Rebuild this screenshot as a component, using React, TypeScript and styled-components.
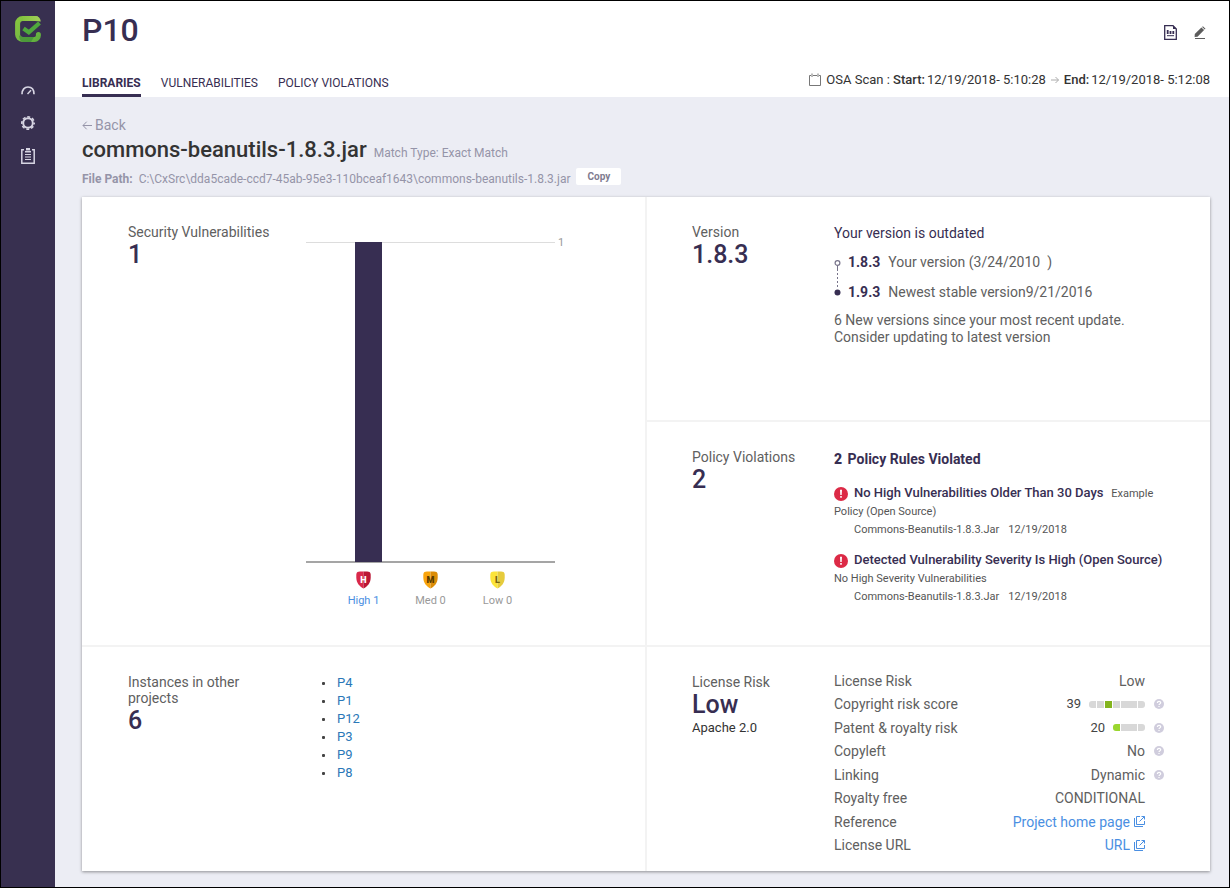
import React from "react";
import styled, { createGlobalStyle } from "styled-components";

const ink = "#372e52";
const grey = "#606060";
const muted = "#9594a8";

const GlobalStyle = createGlobalStyle`
  *, *::before, *::after { box-sizing: border-box; }
  body { margin: 0; font-family: Roboto, "Liberation Sans", sans-serif; color: #333; background: #ecedf4; }
  h1, h2, h3, p, ul, dl, dd, dt { margin: 0; padding: 0; font-weight: 400; }
  ul { list-style: none; }
  a { text-decoration: none; }
  svg { display: block; flex: none; }
`;

const Shell = styled.div`
  display: flex;
  min-height: 100vh;
  border: 1px solid #000;
`;

const Sidebar = styled.nav`
  flex: none;
  width: 54px;
  background: #383050;
  display: flex;
  flex-direction: column;
  align-items: center;
  padding-top: 15px;
`;

const SideLinks = styled.div`
  display: flex;
  flex-direction: column;
  margin-top: 31px;
`;

const SideLink = styled.a`
  display: flex;
  align-items: center;
  justify-content: center;
  width: 54px;
  height: 33px;
`;

const Main = styled.div`
  flex: 1;
  min-width: 0;
`;

const Header = styled.header`
  background: #fff;
  padding: 9px 19px 0 27px;
`;

const Bar = styled.div<{ $align?: string }>`
  display: flex;
  justify-content: space-between;
  align-items: ${(p) => p.$align ?? "center"};
`;

const PageTitle = styled.h1`
  font-size: 32px;
  line-height: 40px;
  font-weight: 500;
  color: ${ink};
`;

const Actions = styled.div`
  display: flex;
  align-items: center;
  gap: 17px;
  padding: 4px 4px 0 0;
`;

const IconButton = styled.button`
  display: block;
  padding: 0;
  border: 0;
  background: none;
  cursor: pointer;
`;

const Tabs = styled.nav`
  display: flex;
  gap: 20px;
  margin-top: 23px;
`;

const Tab = styled.a<{ $active?: boolean }>`
  font-size: 12px;
  line-height: 20px;
  padding-bottom: 1px;
  color: ${ink};
  font-weight: ${(p) => (p.$active ? 700 : 400)};
  border-bottom: 3px solid ${(p) => (p.$active ? ink : "transparent")};
`;

const ScanInfo = styled.div`
  display: flex;
  align-items: center;
  gap: 5px;
  font-size: 13px;
  line-height: 16px;
  margin-top: 22px;
  color: #333;
  b { font-weight: 500; margin-right: 2px; }
`;

const Content = styled.main`
  padding: 20px 19px 16px 27px;
`;

const BackLink = styled.a`
  display: flex;
  width: max-content;
  align-items: center;
  gap: 3px;
  font-size: 14px;
  line-height: 16px;
  color: ${muted};
`;

const TitleRow = styled.div`
  display: flex;
  align-items: baseline;
  gap: 7px;
  margin-top: 1px;
`;

const LibraryName = styled.h2`
  font-size: 22px;
  line-height: 32px;
  font-weight: 500;
  color: #333;
`;

const MatchType = styled.span`
  font-size: 12px;
  color: ${muted};
`;

const PathRow = styled.div`
  display: flex;
  align-items: flex-end;
  gap: 6px;
  height: 20px;
  margin-top: 1px;
  font-size: 12px;
  line-height: 16px;
  color: ${muted};
  b { font-weight: 700; margin-right: 3px; }
`;

const CopyButton = styled.button`
  width: 45px;
  height: 17px;
  align-self: flex-start;
  margin-top: 1px;
  padding: 0;
  border: 0;
  border-radius: 2px;
  background: #fff;
  font: 700 10px/17px Roboto, "Liberation Sans", sans-serif;
  color: #7f7c90;
`;

const Grid = styled.div`
  display: grid;
  grid-template-columns: 1fr 1fr;
  grid-template-rows: minmax(223px, auto) minmax(223px, auto) minmax(224px, auto);
  gap: 2px;
  margin-top: 10px;
  background: #f3f3f3;
  box-shadow: 0 1px 3px rgba(0, 0, 0, 0.4);
`;

const Card = styled.section<{ $tall?: boolean; $wide?: boolean }>`
  display: grid;
  grid-template-columns: ${(p) => (p.$wide ? 178 : 142)}px 1fr;
  grid-row: span ${(p) => (p.$tall ? 2 : 1)};
  padding: 0 36px 0 ${(p) => (p.$wide ? 46 : 45)}px;
  background: #fff;
`;

const Summary = styled.div`
  padding-top: 27px;
`;

const Label = styled.h3`
  font-size: 14px;
  line-height: 16px;
  color: ${grey};
`;

const Figure = styled.p`
  font-size: 25px;
  line-height: 30px;
  font-weight: 500;
  color: ${ink};
`;

const Note = styled.p`
  font-size: 13px;
  line-height: 16px;
  color: #333;
`;

const Detail = styled.div<{ $top: number }>`
  padding-top: ${(p) => p.$top}px;
  min-width: 0;
`;

const Plot = styled.div`
  position: relative;
  width: 249px;
  height: 321px;
  padding-left: 49px;
  border-top: 1px solid #ddd;
  border-bottom: 2px solid #a5a5a5;
`;

const Column = styled.div`
  position: relative;
  width: 27px;
  background: ${ink};
  margin-top: -1px;
`;

const AxisMark = styled.span`
  position: absolute;
  left: 100%;
  top: -7px;
  padding-left: 3px;
  font-size: 11px;
  line-height: 14px;
  color: #999;
`;

const Severities = styled.div`
  display: flex;
  padding: 8px 0 0 24px;
`;

const Severity = styled.div<{ $active?: boolean }>`
  display: flex;
  flex-direction: column;
  align-items: center;
  gap: 4px;
  width: 67px;
  font-size: 11px;
  line-height: 16px;
  color: ${(p) => (p.$active ? "#4a8fe2" : "#999")};
`;

const ProjectList = styled.ul`
  padding-left: 16px;
`;

const Project = styled.li`
  display: flex;
  align-items: center;
  gap: 12px;
  font-size: 13px;
  line-height: 18px;
  &::before {
    content: "";
    width: 3px;
    height: 3px;
    border-radius: 1px;
    background: #444;
  }
  a { color: #2a78b8; }
`;

const Lead = styled.p<{ $strong?: boolean }>`
  font-size: 14px;
  line-height: 18px;
  font-weight: ${(p) => (p.$strong ? 700 : 400)};
  color: ${ink};
  b { margin-right: 2px; }
`;

const Versions = styled.div`
  display: flex;
  gap: 7px;
  margin-top: 5px;
  svg { margin-top: 13px; }
`;

const VersionLine = styled.p`
  display: flex;
  gap: 8px;
  font-size: 14px;
  line-height: 30px;
  color: ${grey};
  white-space: pre;
  b { font-weight: 700; color: ${ink}; }
`;

const Advice = styled.p`
  font-size: 14px;
  line-height: 17px;
  margin-top: 5px;
  color: ${grey};
`;

const Rule = styled.div`
  margin-top: 16px;
  font-size: 11px;
  line-height: 18px;
  color: #555;
  & + & { margin-top: 12px; }
  svg { display: inline-block; vertical-align: -4px; margin-right: 6px; }
  b { font-size: 13px; font-weight: 500; color: ${ink}; margin-right: 5px; }
`;

const RuleSource = styled.p`
  display: flex;
  gap: 9px;
  padding-left: 20px;
`;

const Facts = styled.dl`
  display: flex;
  flex-direction: column;
  padding: 22px 10px 14px 0;
`;

const Fact = styled.div`
  flex: 1;
  display: grid;
  grid-template-columns: 1fr auto 19px;
  align-items: center;
  font-size: 14px;
  line-height: 20px;
  color: ${grey};
  button { justify-self: end; }
`;

const Value = styled.dd`
  display: flex;
  align-items: center;
  gap: 8px;
  a { display: flex; align-items: center; gap: 4px; color: #4a8fe2; }
`;

const Score = styled.span`
  font-size: 13px;
  color: #444;
`;

const Meter = styled.span`
  display: flex;
  gap: 1px;
  border-radius: 3px;
  overflow: hidden;
`;

const Segment = styled.span<{ $width: number; $color?: string }>`
  width: ${(p) => p.$width}px;
  height: 7px;
  background: ${(p) => p.$color ?? "#d8d8d8"};
`;

const Logo = () => (
  <svg width="26" height="26" viewBox="0 0 26 26" fill="none">
    <defs>
      <linearGradient id="logoRing" x1="0" y1="0" x2="1" y2="1">
        <stop offset="0" stopColor="#86c440" />
        <stop offset="0.6" stopColor="#74b943" />
        <stop offset="1" stopColor="#5fae3e" />
      </linearGradient>
      <linearGradient id="logoTop" x1="0" y1="0" x2="1" y2="0">
        <stop offset="0" stopColor="#86c440" />
        <stop offset="1" stopColor="#a2cf5a" />
      </linearGradient>
    </defs>
    <path d="M21 2.600H7.500A5 5 0 0 0 2.600 7.500V18.500A5 5 0 0 0 7.500 23.400H19.500A4 4 0 0 0 23.400 19.500V18.500" stroke="url(#logoRing)" strokeWidth="5" strokeLinecap="round" />
    <path d="M8 0H20C23.500 0 25.500 2 25.800 5.500L20 5H8Z" fill="url(#logoTop)" />
    <path d="M4 19.500L8 21H19L16 26H8.500C6 26 4.500 24 4 19.500Z" fill="#3f8f37" opacity="0.7" />
    <path d="M8.500 12.500L13.800 16.300L24.500 7" stroke="#4fa83d" strokeWidth="4.200" />
  </svg>
);

const GaugeIcon = () => (
  <svg width="14" height="10" viewBox="0 0 14 10" fill="none" stroke="#d6d4e2" strokeWidth="1.700">
    <path d="M1 9.200C1 4.500 3.500 2 7 2 10.500 2 13 4.500 13 9.200" />
    <path d="M6.500 9L10 5.200" strokeWidth="1.500" />
  </svg>
);

const GearIcon = () => (
  <svg width="14" height="14" viewBox="0 0 14 14" fill="none" stroke="#d6d4e2">
    <circle cx="7" cy="7" r="4.800" strokeWidth="2" />
    <circle cx="7" cy="7" r="6.200" strokeWidth="1.600" strokeDasharray="2.900 1.970" strokeDashoffset="1.450" />
  </svg>
);

const ClipboardIcon = () => (
  <svg width="14" height="16" viewBox="0 0 14 16" fill="none" stroke="#d6d4e2" strokeWidth="1.500">
    <path d="M3 1.800H.800V15.200H13.200V1.800H11" />
    <path d="M5 1.200H9" strokeWidth="2.400" />
    <path d="M4 3.700H10" strokeWidth="1.600" />
    <path d="M4 6.500H10M4 9H10M4 11.500H10" strokeWidth="1.200" />
  </svg>
);

const ReportIcon = () => (
  <svg width="13" height="15" viewBox="0 0 13 15" fill="none" stroke={ink}>
    <path d="M.700 .700H9L12.300 4V14.300H.700Z" strokeWidth="1.300" />
    <path d="M9 .500V4H12.500Z" fill={ink} stroke="none" />
    <path d="M3.700 5V9M6.500 6V9M9.300 6V9" strokeWidth="1.800" />
    <path d="M3 10.700H10" />
  </svg>
);

const PencilIcon = () => (
  <svg width="12" height="13" viewBox="0 0 12 13" fill="#5d5d5d">
    <path d="M.800 8L7.400 1.400 10.100 4.100 3.500 10.700 .600 11ZM8.100 .900L8.900 .200 11.500 2.700 10.800 3.500Z" />
    <path d="M1 12H11V13H1Z" />
  </svg>
);

const CalendarIcon = () => (
  <svg width="12" height="14" viewBox="0 0 12 14" fill="none" stroke="#777">
    <path d="M2 2.500H.500V12.500H11.500V2.500H10M4 2.500H8M3 .500V4M9 .500V4" />
  </svg>
);

const ArrowRight = () => (
  <svg width="8" height="8" viewBox="0 0 8 8" fill="none" stroke="#aaa">
    <path d="M0 4H7.500M4.500 1L7.500 4 4.500 7" />
  </svg>
);

const ArrowLeft = () => (
  <svg width="10" height="9" viewBox="0 0 10 9" fill="none" stroke={muted}>
    <path d="M10 4.500H1M4.700 .700L1 4.500 4.700 8.300" />
  </svg>
);

const VersionTrack = () => (
  <svg width="7" height="36" viewBox="0 0 7 36" fill="none" stroke={ink}>
    <circle cx="3.500" cy="3" r="2.400" stroke="#77738a" strokeWidth="1.200" />
    <path d="M3.500 6V11" stroke="#77738a" />
    <path d="M3.500 13V29" stroke="#77738a" strokeDasharray="2 2" />
    <circle cx="3.500" cy="32.500" r="3" fill={ink} stroke="none" />
  </svg>
);

const AlertIcon = () => (
  <svg width="14" height="14" viewBox="0 0 14 14">
    <circle cx="7" cy="7" r="7" fill="#dc2a46" />
    <path d="M6 2.800H8L7.700 8H6.300ZM6.200 9H7.800V10.800H6.200Z" fill="#fff" />
  </svg>
);

const HelpIcon = () => (
  <svg width="10" height="10" viewBox="0 0 10 10">
    <circle cx="5" cy="5" r="5" fill="#d0cddd" />
    <path d="M3.400 3.900C3.400 1.800 6.700 1.900 6.700 3.800 6.700 4.800 5 5 5 6.100M5 7V8" stroke="#fff" strokeWidth="1.200" fill="none" />
  </svg>
);

const ExternalIcon = () => (
  <svg width="11" height="11" viewBox="0 0 11 11" fill="none" stroke="#4a8fe2">
    <path d="M6 .500H2.500V8.500H10.500V5M7.500 .500H10.500V3.500M10.500 .500L5.500 5.500M.500 2V10.500H9" />
  </svg>
);

const Shield = ({ letter, left, right, ink: fill }: { letter: string; left: string; right: string; ink: string }) => (
  <svg width="15" height="18" viewBox="0 0 15 18">
    <path d="M7.500 .500C5 .500 2.500 .500 1.500 1 .700 1.500 .300 2.500 .300 4V7C.500 12 3.500 15.500 7.500 17.500Z" fill={left} />
    <path d="M7.500 .500C10 .500 12.500 .500 13.500 1 14.300 1.500 14.700 2.500 14.700 4V7C14.500 12 11.500 15.500 7.500 17.500Z" fill={right} />
    <text x="7.500" y="11.500" textAnchor="middle" fontFamily="Roboto, sans-serif" fontSize="9" fontWeight="900" fill={fill}>
      {letter}
    </text>
  </svg>
);

const severities = [
  { name: "High 1", letter: "H", left: "#d9284a", right: "#bb1735", ink: "#fff", active: true },
  { name: "Med 0", letter: "M", left: "#f8a40c", right: "#dc8c06", ink: "#5a3a00", active: false },
  { name: "Low 0", letter: "L", left: "#fbe43a", right: "#e6cb3c", ink: "#7a6510", active: false },
];

const projects = ["P4", "P1", "P12", "P3", "P9", "P8"];

const rules = [
  { name: "No High Vulnerabilities Older Than 30 Days", policy: "Example Policy (Open Source)" },
  { name: "Detected Vulnerability Severity Is High (Open Source)", policy: "No High Severity Vulnerabilities" },
];

type FactRow = { term: string; value: React.ReactNode; help?: boolean };

const facts: FactRow[] = [
  { term: "License Risk", value: "Low" },
  {
    term: "Copyright risk score",
    help: true,
    value: (
      <>
        <Score>39</Score>
        <Meter>
          <Segment $width={7} />
          <Segment $width={7} />
          <Segment $width={7} $color="#83b41e" />
          <Segment $width={7} />
          <Segment $width={16} />
          <Segment $width={7} />
        </Meter>
      </>
    ),
  },
  {
    term: "Patent & royalty risk",
    help: true,
    value: (
      <>
        <Score>20</Score>
        <Meter>
          <Segment $width={7} $color="#9ad62f" />
          <Segment $width={16} />
          <Segment $width={7} />
        </Meter>
      </>
    ),
  },
  { term: "Copyleft", value: "No", help: true },
  { term: "Linking", value: "Dynamic", help: true },
  { term: "Royalty free", value: "CONDITIONAL" },
  { term: "Reference", value: <a href="#home">Project home page <ExternalIcon /></a> },
  { term: "License URL", value: <a href="#license">URL <ExternalIcon /></a> },
];

export default function App() {
  return (
    <>
      <GlobalStyle />
      <Shell>
        <Sidebar aria-label="Main">
          <Logo />
          <SideLinks>
            <SideLink href="#dashboard" aria-label="Dashboard"><GaugeIcon /></SideLink>
            <SideLink href="#settings" aria-label="Settings"><GearIcon /></SideLink>
            <SideLink href="#policies" aria-label="Policies"><ClipboardIcon /></SideLink>
          </SideLinks>
        </Sidebar>
        <Main>
          <Header>
            <Bar>
              <PageTitle>P10</PageTitle>
              <Actions>
                <IconButton aria-label="Report"><ReportIcon /></IconButton>
                <IconButton aria-label="Edit"><PencilIcon /></IconButton>
              </Actions>
            </Bar>
            <Bar $align="flex-start">
              <Tabs aria-label="Sections">
                <Tab href="#libraries" $active>LIBRARIES</Tab>
                <Tab href="#vulnerabilities">VULNERABILITIES</Tab>
                <Tab href="#violations">POLICY VIOLATIONS</Tab>
              </Tabs>
              <ScanInfo>
                <CalendarIcon />
                <span>OSA Scan : <b>Start:</b>12/19/2018- 5:10:28</span>
                <ArrowRight />
                <span><b>End:</b>12/19/2018- 5:12:08</span>
              </ScanInfo>
            </Bar>
          </Header>
          <Content>
            <BackLink href="#back"><ArrowLeft /> Back</BackLink>
            <TitleRow>
              <LibraryName>commons-beanutils-1.8.3.jar</LibraryName>
              <MatchType>Match Type: Exact Match</MatchType>
            </TitleRow>
            <PathRow>
              <span><b>File Path:</b> C:\CxSrc\dda5cade-ccd7-45ab-95e3-110bceaf1643\commons-beanutils-1.8.3.jar</span>
              <CopyButton>Copy</CopyButton>
            </PathRow>
            <Grid>
              <Card $tall $wide>
                <Summary>
                  <Label>Security Vulnerabilities</Label>
                  <Figure>1</Figure>
                </Summary>
                <Detail $top={45}>
                  <Plot>
                    <Column style={{ height: "320px" }} />
                    <AxisMark>1</AxisMark>
                  </Plot>
                  <Severities>
                    {severities.map((s) => (
                      <Severity key={s.name} $active={s.active}>
                        <Shield letter={s.letter} left={s.left} right={s.right} ink={s.ink} />
                        {s.name}
                      </Severity>
                    ))}
                  </Severities>
                </Detail>
              </Card>
              <Card>
                <Summary>
                  <Label>Version</Label>
                  <Figure>1.8.3</Figure>
                </Summary>
                <Detail $top={27}>
                  <Lead>Your version is outdated</Lead>
                  <Versions>
                    <VersionTrack />
                    <div>
                      <VersionLine><b>1.8.3</b><span>Your version (3/24/2010  )</span></VersionLine>
                      <VersionLine><b>1.9.3</b><span>Newest stable version9/21/2016</span></VersionLine>
                    </div>
                  </Versions>
                  <Advice>
                    6 New versions since your most recent update.<br />
                    Consider updating to latest version
                  </Advice>
                </Detail>
              </Card>
              <Card>
                <Summary>
                  <Label>Policy Violations</Label>
                  <Figure>2</Figure>
                </Summary>
                <Detail $top={28}>
                  <Lead $strong><b>2</b> Policy Rules Violated</Lead>
                  {rules.map((r) => (
                    <Rule key={r.name}>
                      <AlertIcon />
                      <b>{r.name}</b> {r.policy}
                      <RuleSource><span>Commons-Beanutils-1.8.3.Jar</span><span>12/19/2018</span></RuleSource>
                    </Rule>
                  ))}
                </Detail>
              </Card>
              <Card $wide>
                <Summary>
                  <Label>Instances in other<br />projects</Label>
                  <Figure>6</Figure>
                </Summary>
                <Detail $top={27}>
                  <ProjectList>
                    {projects.map((p) => (
                      <Project key={p}><a href={"#" + p}>{p}</a></Project>
                    ))}
                  </ProjectList>
                </Detail>
              </Card>
              <Card>
                <Summary>
                  <Label>License Risk</Label>
                  <Figure>Low</Figure>
                  <Note>Apache 2.0</Note>
                </Summary>
                <Facts>
                  {facts.map((f) => (
                    <Fact key={f.term}>
                      <dt>{f.term}</dt>
                      <Value>{f.value}</Value>
                      {f.help && <IconButton aria-label={"About " + f.term}><HelpIcon /></IconButton>}
                    </Fact>
                  ))}
                </Facts>
              </Card>
            </Grid>
          </Content>
        </Main>
      </Shell>
    </>
  );
}
